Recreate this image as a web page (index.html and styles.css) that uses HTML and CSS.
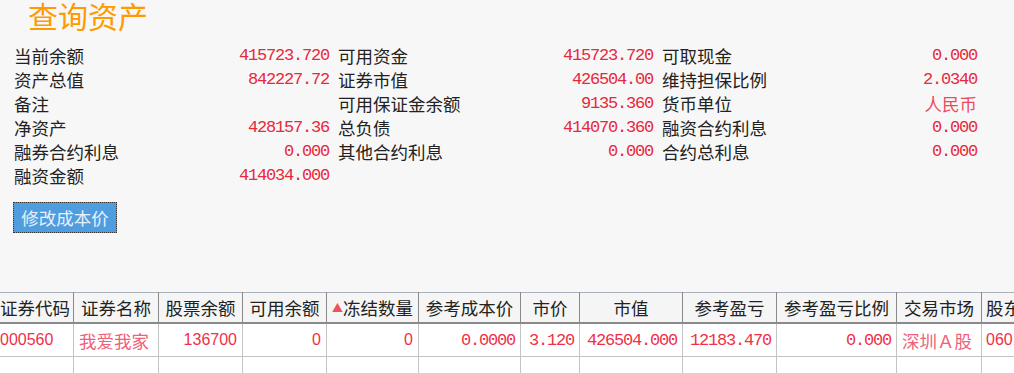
FILE: index.html
```html
<!DOCTYPE html>
<html lang="zh">

<head>
    <meta charset="UTF-8">
    <meta name="viewport" content="width=device-width, initial-scale=1.0">
    <title>查询资产</title>
    <link rel="stylesheet" href="styles.css">
</head>

<body>
    <main>
        <h1 class="title">查询资产</h1>

        <div class="info">
            <span class="label">当前余额</span><span class="num">415723.720</span>
            <span class="label">可用资金</span><span class="num">415723.720</span>
            <span class="label">可取现金</span><span class="num">0.000</span>

            <span class="label">资产总值</span><span class="num">842227.72</span>
            <span class="label">证券市值</span><span class="num">426504.00</span>
            <span class="label">维持担保比例</span><span class="num">2.0340</span>

            <span class="label">备注</span><span class="num"></span>
            <span class="label">可用保证金余额</span><span class="num">9135.360</span>
            <span class="label">货币单位</span><span class="num cn">人民币</span>

            <span class="label">净资产</span><span class="num">428157.36</span>
            <span class="label">总负债</span><span class="num">414070.360</span>
            <span class="label">融资合约利息</span><span class="num">0.000</span>

            <span class="label">融券合约利息</span><span class="num">0.000</span>
            <span class="label">其他合约利息</span><span class="num">0.000</span>
            <span class="label">合约总利息</span><span class="num">0.000</span>

            <span class="label">融资金额</span><span class="num">414034.000</span>
        </div>

        <button class="edit">修改成本价</button>
    </main>

    <div class="grid">
        <table>
            <colgroup>
                <col style="width: 78px">
                <col style="width: 85px">
                <col style="width: 84px">
                <col style="width: 84px">
                <col style="width: 92px">
                <col style="width: 102px">
                <col style="width: 59px">
                <col style="width: 103px">
                <col style="width: 94px">
                <col style="width: 120px">
                <col style="width: 85px">
                <col style="width: 90px">
            </colgroup>
            <thead>
                <tr>
                    <th class="left">证券代码</th>
                    <th>证券名称</th>
                    <th>股票余额</th>
                    <th>可用余额</th>
                    <th><span class="sort">▲</span>冻结数量</th>
                    <th>参考成本价</th>
                    <th>市价</th>
                    <th>市值</th>
                    <th>参考盈亏</th>
                    <th>参考盈亏比例</th>
                    <th>交易市场</th>
                    <th class="left">股东代码</th>
                </tr>
            </thead>
            <tbody>
                <tr>
                    <td class="code">000560</td>
                    <td class="name">我爱我家</td>
                    <td class="sans">136700</td>
                    <td class="sans">0</td>
                    <td class="sans">0</td>
                    <td>0.0000</td>
                    <td>3.120</td>
                    <td>426504.000</td>
                    <td>12183.470</td>
                    <td>0.000</td>
                    <td class="name">深圳Ａ股</td>
                    <td class="code">0601234567</td>
                </tr>
                <tr class="empty">
                    <td></td><td></td><td></td><td></td><td></td><td></td>
                    <td></td><td></td><td></td><td></td><td></td><td></td>
                </tr>
            </tbody>
        </table>
    </div>
</body>

</html>
```

FILE: styles.css
```css
html,
body {
    margin: 0px;
    padding: 0px;
    height: 100%;
    overflow: hidden;
}

body {
    background-color: #f7f7f7;
    color: #222222;
    font-family: "Noto Sans CJK SC", sans-serif;
    font-size: 17.5px;
}

main {
    padding-left: 14px;
}

.title {
    margin: 0px;
    padding-left: 14px;
    height: 44px;
    line-height: 32px;
    margin-top: -1px;
    margin-bottom: 1px;
    font-size: 30px;
    font-weight: normal;
    color: #ff9a00;
}

.info {
    display: grid;
    grid-template-columns: 230px 85px 239px 85px 239px 85px;
    width: 963px;
    line-height: 24px;
}

.info .label {
    white-space: nowrap;
}

.info .label:nth-child(6n+3),
.info .label:nth-child(6n+5) {
    padding-left: 9px;
}

.info .num {
    text-align: right;
    color: #e8283c;
    font-family: "Liberation Mono", monospace;
    font-size: 17px;
    letter-spacing: -1.2px;
    white-space: nowrap;
    direction: rtl;
}

.info .num.cn {
    font-family: "Noto Sans CJK SC", sans-serif;
    font-size: 17.5px;
    letter-spacing: 0px;
    color: #ee4a5e;
}

.edit {
    margin-top: 14px;
    margin-left: -1px;
    width: 104px;
    height: 31px;
    padding: 0px;
    font-family: "Noto Sans CJK SC", sans-serif;
    font-size: 17.5px;
    color: #e8f0fa;
    background-color: #4f9ddf;
    border: 1px dotted #333333;
    cursor: pointer;
}

.grid {
    margin-top: 59px;
    overflow: hidden;
}

table {
    margin-left: -5px;
    table-layout: fixed;
    border-collapse: collapse;
    width: 1076px;
    background-color: #ffffff;
}

th {
    height: 29px;
    padding: 0px 4px;
    font-weight: normal;
    text-align: center;
    white-space: nowrap;
    overflow: hidden;
    background-color: #f5f5f5;
    border-top: 1px solid #a8b0bc;
    border-bottom: 2px solid #8a8a8a;
    border-left: 1px solid #8a8a8a;
    border-right: 1px solid #8a8a8a;
}

th.left {
    text-align: left;
}

.sort {
    color: #f0505a;
    font-size: 11px;
    vertical-align: 3px;
}

td {
    height: 32px;
    padding: 0px 5px;
    text-align: right;
    white-space: nowrap;
    overflow: hidden;
    color: #f03048;
    font-family: "Liberation Mono", monospace;
    font-size: 17px;
    letter-spacing: -1.2px;
    border: 1px solid #c4c4c4;
}

td.sans,
td.code {
    font-family: "Liberation Sans", sans-serif;
    font-size: 16px;
    letter-spacing: 0px;
}

td.code {
    text-align: left;
    padding-left: 4px;
}

td.name {
    text-align: left;
    font-family: "Noto Sans CJK SC", sans-serif;
    font-size: 17.5px;
    letter-spacing: 0px;
    color: #f0607a;
}

tr.empty td {
    height: 30px;
}
```
